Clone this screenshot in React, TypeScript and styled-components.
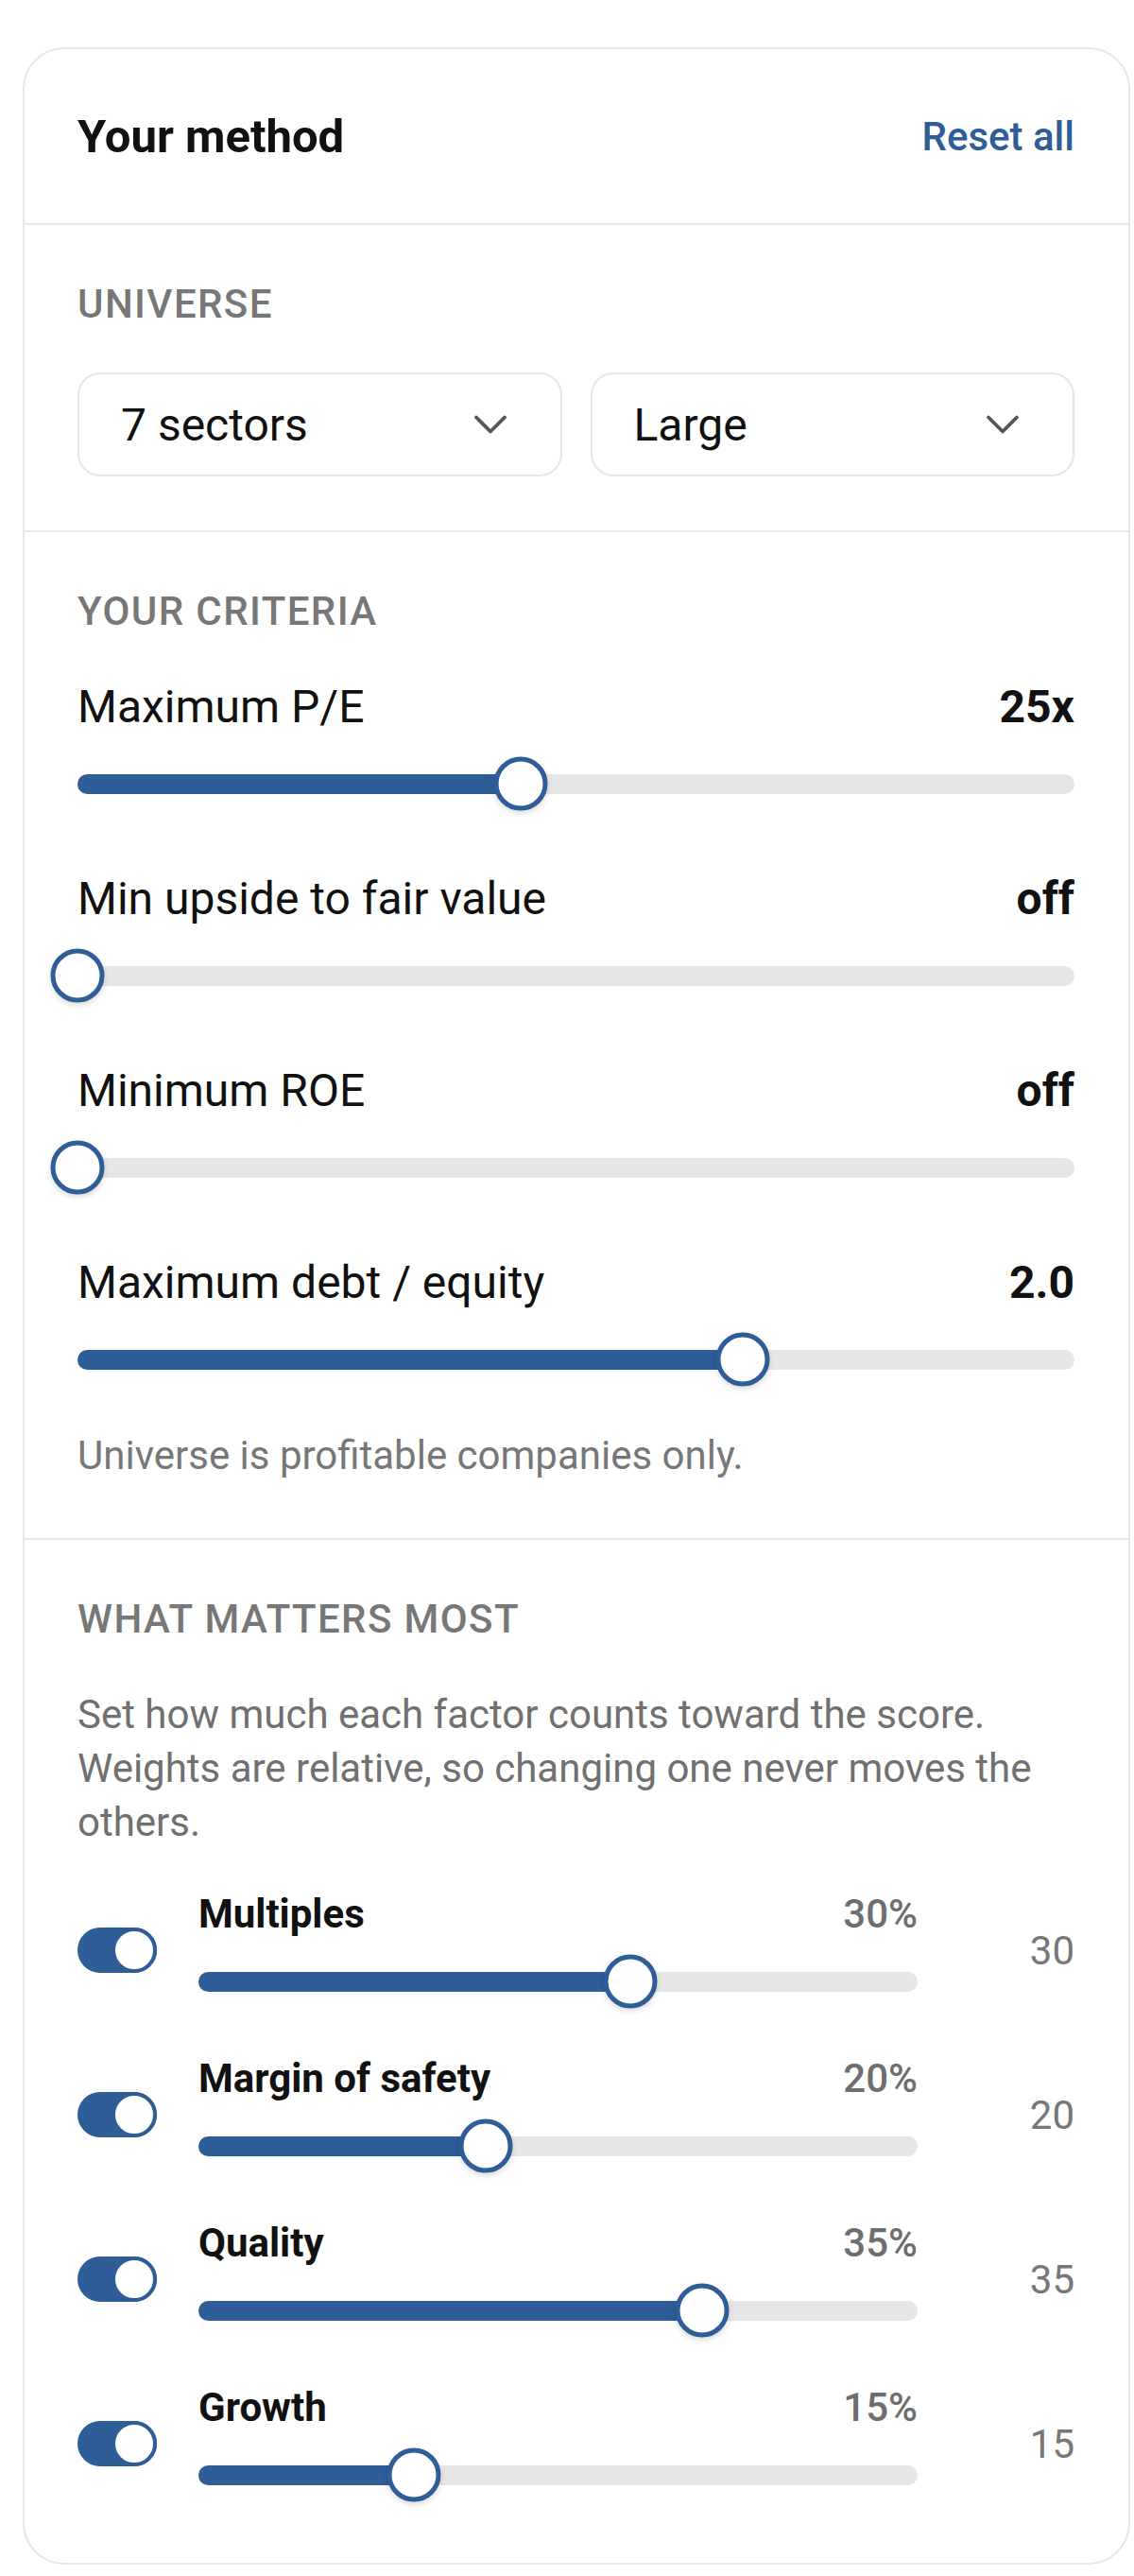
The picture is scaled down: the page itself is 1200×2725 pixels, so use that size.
import styled, { createGlobalStyle } from 'styled-components';
import { ChevronDown } from 'lucide-react';

const BLUE = '#2e5d98';

const GlobalStyle = createGlobalStyle`
  * { box-sizing: border-box; }
  body {
    margin: 0;
    background: #fff;
    font-family: Roboto, 'Noto Sans', Arial, sans-serif;
    color: #111;
  }
`;

const Page = styled.div`
  padding: 50px 4px 12px 24px;
`;

const Card = styled.div`
  width: 1172px;
  background: #fff;
  border: 2px solid #e6e6e6;
  border-radius: 44px;
  overflow: hidden;
`;

const Header = styled.div`
  height: 186px;
  display: flex;
  align-items: center;
  justify-content: space-between;
  padding: 0 57px 0 56px;
  border-bottom: 2px solid #e8e8e8;
`;

const Title = styled.h1`
  margin: 0;
  font-size: 49px;
  font-weight: 700;
  color: #111;
`;

const ResetLink = styled.a`
  font-size: 42px;
  font-weight: 500;
  color: ${BLUE};
  text-decoration: none;
`;

const Section = styled.section<{ $bottom: number; $divider?: boolean }>`
  padding: 59px 57px ${({ $bottom }) => $bottom}px 56px;
  border-bottom: ${({ $divider }) => ($divider ? '2px solid #e8e8e8' : 'none')};
`;

const SectionLabel = styled.div`
  font-size: 42px;
  line-height: 50px;
  font-weight: 500;
  letter-spacing: 1.4px;
  color: #777;
  text-transform: uppercase;
  margin-bottom: 47px;
`;

const SelectRow = styled.div`
  display: grid;
  grid-template-columns: 1fr 1fr;
  gap: 30px;
`;

const Select = styled.div`
  height: 110px;
  display: flex;
  align-items: center;
  justify-content: space-between;
  padding: 0 44px 0 44px;
  border: 2px solid #e6e6e6;
  border-radius: 24px;
  font-size: 48px;
  color: #111;
`;

const CriteriaList = styled.div`
  display: flex;
  flex-direction: column;
  gap: 63px;
`;

const LabelLine = styled.div<{ $size: number; $height: number }>`
  display: flex;
  justify-content: space-between;
  align-items: baseline;
  font-size: ${({ $size }) => $size}px;
  line-height: ${({ $height }) => $height}px;
`;

const CriterionName = styled.span`
  color: #111;
`;

const CriterionValue = styled.span`
  font-weight: 700;
  color: #111;
`;

const SliderBox = styled.div<{ $gap: number }>`
  height: 60px;
  margin-top: ${({ $gap }) => $gap}px;
  display: flex;
  align-items: center;
`;

const Track = styled.div`
  position: relative;
  flex: 1;
  height: 21px;
  border-radius: 11px;
  background: #e6e6e6;
`;

const Fill = styled.div`
  position: absolute;
  left: 0;
  top: 0;
  bottom: 0;
  border-radius: 11px;
  background: ${BLUE};
`;

const Thumb = styled.div`
  position: absolute;
  top: 50%;
  width: 57px;
  height: 57px;
  border-radius: 50%;
  background: #fff;
  border: 5px solid ${BLUE};
  box-shadow: 0 3px 6px rgba(0, 0, 0, 0.14);
  transform: translate(-50%, -50%);
`;

const Note = styled.p<{ $top: number }>`
  margin: ${({ $top }) => $top}px 0 0;
  font-size: 42px;
  line-height: 51px;
  color: #777;
`;

const Description = styled.p`
  margin: 0 0 44px;
  font-size: 42px;
  line-height: 57px;
  color: #707070;
`;

const FactorList = styled.div`
  display: flex;
  flex-direction: column;
  gap: 48px;
`;

const FactorRow = styled.div`
  display: grid;
  grid-template-columns: 84px 1fr 122px;
  column-gap: 44px;
  align-items: center;
`;

const Toggle = styled.div`
  position: relative;
  width: 84px;
  height: 48px;
  border-radius: 24px;
  background: ${BLUE};
`;

const Knob = styled.span`
  position: absolute;
  right: 0;
  top: 0;
  width: 48px;
  height: 48px;
  border-radius: 50%;
  background: #fff;
  border: 4px solid ${BLUE};
`;

const FactorName = styled.span`
  font-weight: 700;
  color: #111;
`;

const FactorPct = styled.span`
  font-weight: 500;
  color: #6e6e6e;
`;

const FactorWeight = styled.div`
  text-align: right;
  font-size: 42px;
  color: #777;
`;

const Slider = ({ value, gap }: { value: number; gap: number }) => (
  <SliderBox $gap={gap}>
    <Track>
      <Fill style={{ width: `${value * 100}%` }} />
      <Thumb style={{ left: `${value * 100}%` }} />
    </Track>
  </SliderBox>
);

const criteria = [
  { name: 'Maximum P/E', value: '25x', pos: 0.445 },
  { name: 'Min upside to fair value', value: 'off', pos: 0 },
  { name: 'Minimum ROE', value: 'off', pos: 0 },
  { name: 'Maximum debt / equity', value: '2.0', pos: 0.667 },
];

const factors = [
  { name: 'Multiples', weight: 30 },
  { name: 'Margin of safety', weight: 20 },
  { name: 'Quality', weight: 35 },
  { name: 'Growth', weight: 15 },
];

export default function App() {
  return (
    <>
      <GlobalStyle />
      <Page>
        <Card>
          <Header>
            <Title>Your method</Title>
            <ResetLink href="#">Reset all</ResetLink>
          </Header>

          <Section $bottom={57} $divider>
            <SectionLabel>Universe</SectionLabel>
            <SelectRow>
              <Select>
                7 sectors
                <ChevronDown size={60} strokeWidth={1.5} color="#555" />
              </Select>
              <Select>
                Large
                <ChevronDown size={60} strokeWidth={1.5} color="#555" />
              </Select>
            </SelectRow>
          </Section>

          <Section $bottom={62} $divider>
            <SectionLabel>Your criteria</SectionLabel>
            <CriteriaList>
              {criteria.map((c) => (
                <div key={c.name}>
                  <LabelLine $size={48} $height={58}>
                    <CriterionName>{c.name}</CriterionName>
                    <CriterionValue>{c.value}</CriterionValue>
                  </LabelLine>
                  <Slider value={c.pos} gap={22} />
                </div>
              ))}
            </CriteriaList>
            <Note $top={46}>Universe is profitable companies only.</Note>
          </Section>

          <Section $bottom={63}>
            <SectionLabel>What matters most</SectionLabel>
            <Description>
              Set how much each factor counts toward the score. Weights are relative, so changing one
              never moves the others.
            </Description>
            <FactorList>
              {factors.map((f) => (
                <FactorRow key={f.name}>
                  <Toggle>
                    <Knob />
                  </Toggle>
                  <div>
                    <LabelLine $size={42} $height={50}>
                      <FactorName>{f.name}</FactorName>
                      <FactorPct>{f.weight}%</FactorPct>
                    </LabelLine>
                    <Slider value={f.weight / 50} gap={16} />
                  </div>
                  <FactorWeight>{f.weight}</FactorWeight>
                </FactorRow>
              ))}
            </FactorList>
          </Section>
        </Card>
      </Page>
    </>
  );
}
